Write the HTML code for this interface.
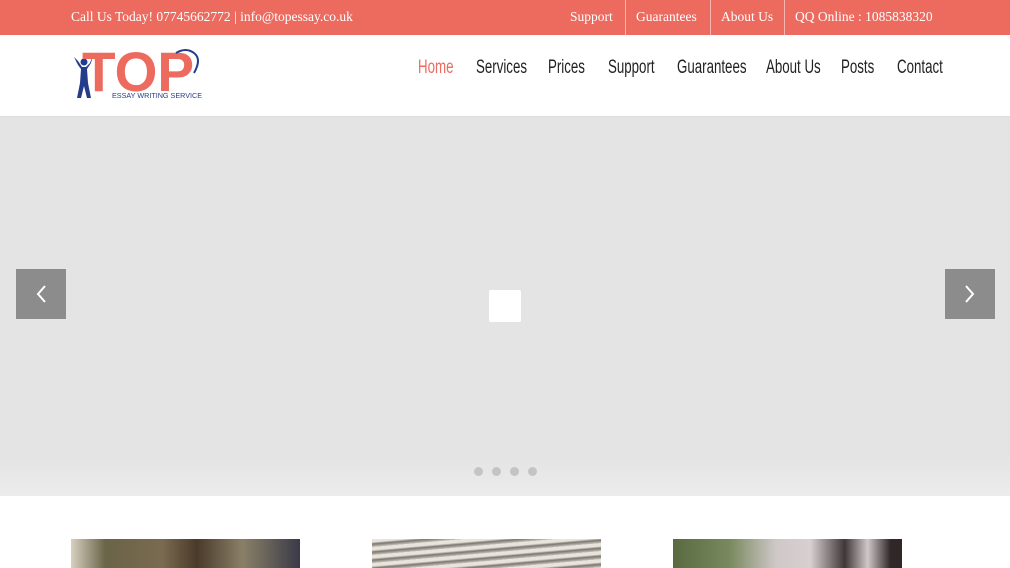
<!DOCTYPE html>
<html><head><meta charset="utf-8"><style>
*{margin:0;padding:0;box-sizing:border-box}
body{width:1010px;height:568px;overflow:hidden;background:#fff;font-family:"Liberation Serif","DejaVu Serif",serif;position:relative}
.top{position:absolute;left:0;top:0;width:1010px;height:35px;background:#ec6a5e;color:#fff;font-size:13.5px}
.top span{position:absolute;top:9px;white-space:nowrap}
.sep{position:absolute;top:0;width:1px;height:35px;background:#f6b5ae}
.nav span{position:absolute;top:57px;font-family:"Liberation Sans",sans-serif;font-size:19px;color:#222;transform:scaleX(.7);transform-origin:left top;white-space:nowrap}
.hero{position:absolute;left:0;top:116px;width:1010px;height:380px;background:linear-gradient(#e4e4e4 0,#e4e4e4 340px,#ececec 380px);border-top:1px solid #ddd}
.arr{position:absolute;top:269px;width:50px;height:50px;background:#8c8c8c}
.dot{position:absolute;top:467px;width:9px;height:9px;border-radius:50%;background:#c4c4c4}
</style></head><body>
<div class="top">
<span style="left:71px">Call Us Today! 07745662772 | info@topessay.co.uk</span>
<span style="left:570px">Support</span><div class="sep" style="left:625px"></div>
<span style="left:636px">Guarantees</span><div class="sep" style="left:710px"></div>
<span style="left:721px">About Us</span><div class="sep" style="left:784px"></div>
<span style="left:795px">QQ Online : 1085838320</span>
</div>
<svg style="position:absolute;left:70px;top:45px" width="140" height="56" viewBox="0 0 140 56">
<path d="M4 12 L8 20 L11 24 L10 38 L7 53 L11 53 L14 41 L17 53 L21 53 L18 38 L17 24 L21 18 L23 10 L20 18 L16 22 L12 22 L8 16Z" fill="#233c8c"/>
<circle cx="14" cy="17" r="3.5" fill="#233c8c"/>
<text x="12" y="46" font-family="Liberation Sans,sans-serif" font-weight="bold" font-size="56" fill="#ec6a5e" textLength="112" lengthAdjust="spacingAndGlyphs">TOP</text>
<path d="M106 8 Q116 2 124 8 Q132 14 124 28" stroke="#233c8c" stroke-width="2" fill="none"/>
<text x="42" y="53" font-family="Liberation Sans,sans-serif" font-size="7" fill="#233c8c" textLength="90" lengthAdjust="spacingAndGlyphs">ESSAY WRITING SERVICE</text>
</svg>
<div class="nav">
<span style="left:418px;color:#ec6a5e">Home</span>
<span style="left:476px">Services</span>
<span style="left:548px">Prices</span>
<span style="left:608px">Support</span>
<span style="left:677px">Guarantees</span>
<span style="left:766px">About Us</span>
<span style="left:841px">Posts</span>
<span style="left:897px">Contact</span>
</div>
<div class="hero"></div>
<div class="arr" style="left:16px"><svg width="50" height="50"><path d="M29 17 L22 25 L29 33" stroke="#fff" stroke-width="2" fill="none"/></svg></div>
<div class="arr" style="left:945px"><svg width="50" height="50"><path d="M21 17 L28 25 L21 33" stroke="#fff" stroke-width="2" fill="none"/></svg></div>
<div style="position:absolute;left:489px;top:290px;width:32px;height:32px;background:#fff;border-radius:2px"></div>
<div class="dot" style="left:474px"></div><div class="dot" style="left:492px"></div><div class="dot" style="left:510px"></div><div class="dot" style="left:528px"></div>
<div style="position:absolute;left:71px;top:539px;width:229px;height:29px;background:linear-gradient(90deg,#d8d0c0 0,#6a6448 15%,#7a6a50 40%,#4a3a2a 55%,#8a8068 75%,#3a3a48 100%)"></div>
<div style="position:absolute;left:372px;top:539px;width:229px;height:29px;background:repeating-linear-gradient(175deg,#e8e4dc 0,#e8e4dc 3px,#7a7670 5px,#c8c4bc 8px)"></div>
<div style="position:absolute;left:673px;top:539px;width:229px;height:29px;background:linear-gradient(90deg,#5a6a40 0,#7a8a60 25%,#cfc8c8 45%,#d8d0d0 60%,#403838 75%,#d0c8c8 85%,#302828 95%)"></div>
</body></html>
